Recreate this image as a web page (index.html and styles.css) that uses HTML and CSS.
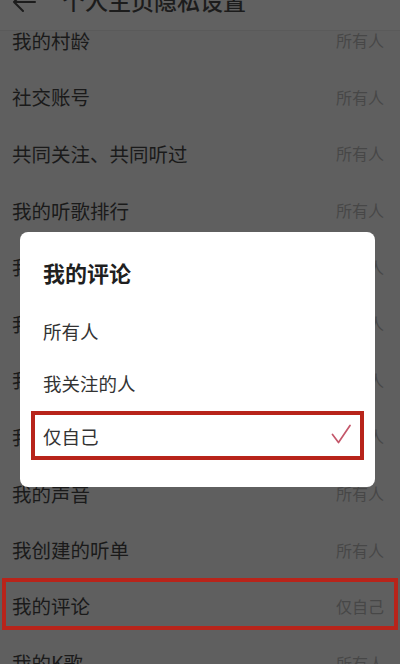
FILE: index.html
```html
<!DOCTYPE html>
<html lang="zh-CN">
<head>
<meta charset="utf-8">
<title>个人主页隐私设置</title>
<link rel="stylesheet" href="styles.css">
</head>
<body>
<div class="app">
  <header class="header">
    <svg class="back" width="26" height="24" viewBox="0 0 26 24">
      <path d="M24 12 H3 M12 3 L3 12 L12 21" fill="none" stroke="#1c1c1c" stroke-width="2" stroke-linecap="round" stroke-linejoin="round"/>
    </svg>
    <h1 class="title">个人主页隐私设置</h1>
  </header>
  <ul class="list">
    <li class="row"><span class="label">我的村龄</span><span class="value">所有人</span></li>
    <li class="row"><span class="label">社交账号</span><span class="value">所有人</span></li>
    <li class="row"><span class="label">共同关注、共同听过</span><span class="value">所有人</span></li>
    <li class="row"><span class="label">我的听歌排行</span><span class="value">所有人</span></li>
    <li class="row"><span class="label">我的主页动态</span><span class="value">所有人</span></li>
    <li class="row"><span class="label">我的收藏</span><span class="value">所有人</span></li>
    <li class="row"><span class="label">我的关注</span><span class="value">所有人</span></li>
    <li class="row"><span class="label">我的粉丝</span><span class="value">所有人</span></li>
    <li class="row"><span class="label">我的声音</span><span class="value">所有人</span></li>
    <li class="row"><span class="label">我创建的听单</span><span class="value">所有人</span></li>
    <li class="row row-marked"><span class="label">我的评论</span><span class="value">仅自己</span></li>
    <li class="row"><span class="label">我的K歌</span><span class="value">所有人</span></li>
  </ul>

  <div class="dialog">
    <div class="dialog-title">我的评论</div>
    <div class="option">所有人</div>
    <div class="option">我关注的人</div>
    <div class="option option-selected">
      <span>仅自己</span>
      <svg class="check" width="20" height="20" viewBox="0 0 20 20">
        <path d="M1.5 10.5 L7.5 18.5 L19 1.5" fill="none" stroke="#c4576a" stroke-width="1.7" stroke-linecap="round" stroke-linejoin="round"/>
      </svg>
    </div>
  </div>
</div>
</body>
</html>
```

FILE: styles.css
```css
html, body {
  margin: 0;
  padding: 0;
}
body {
  width: 400px;
  height: 664px;
  overflow: hidden;
  background: #5f5f5f;
  font-family: "Noto Sans CJK SC", "Noto Sans", sans-serif;
}
.app {
  position: relative;
  width: 400px;
  height: 664px;
  overflow: hidden;
  background: #5f5f5f;
}
.header {
  position: relative;
  z-index: 1;
  height: 31px;
  display: flex;
  align-items: flex-start;
  background: #616161;
  border-bottom: 1px solid #5a5a5a;
  box-sizing: border-box;
}
.back {
  margin: -10px 0 0 11px;
  flex: none;
}
.title {
  margin: -13px 0 0 25px;
  font-size: 23px;
  line-height: 26px;
  font-weight: 500;
  color: #1c1c1c;
}
.list {
  list-style: none;
  margin: -19px 0 0;
  padding: 0;
}
.row {
  height: 56.6px;
  display: flex;
  align-items: center;
  justify-content: space-between;
  padding: 0 16px 0 12px;
  box-sizing: border-box;
}
.label {
  font-size: 19.5px;
  color: #1a1a1a;
}
.value {
  font-size: 16px;
  color: #474747;
}
.row-marked {
  height: 52px;
  margin: 0 2px 4.6px;
  border: 4px solid #b8241a;
  padding: 4px 10px 0 6px;
}
.dialog {
  position: absolute;
  left: 20px;
  top: 232px;
  width: 355px;
  height: 255px;
  box-sizing: border-box;
  background: #ffffff;
  border-radius: 8px;
  padding: 0 11px 0 11px;
}
.dialog-title {
  padding: 27px 0 0 12px;
  height: 73px;
  box-sizing: border-box;
  font-size: 22px;
  line-height: 26px;
  font-weight: 700;
  color: #1f1f1f;
}
.option {
  height: 52px;
  display: flex;
  align-items: center;
  justify-content: space-between;
  padding: 0 8px;
  border: 4px solid transparent;
  box-sizing: border-box;
  font-size: 18.5px;
  color: #333333;
}
.option-selected {
  height: 49px;
  margin-top: 2px;
  border-color: #b8241a;
}
.check {
  margin: -4px 1px 0 0;
}
```
